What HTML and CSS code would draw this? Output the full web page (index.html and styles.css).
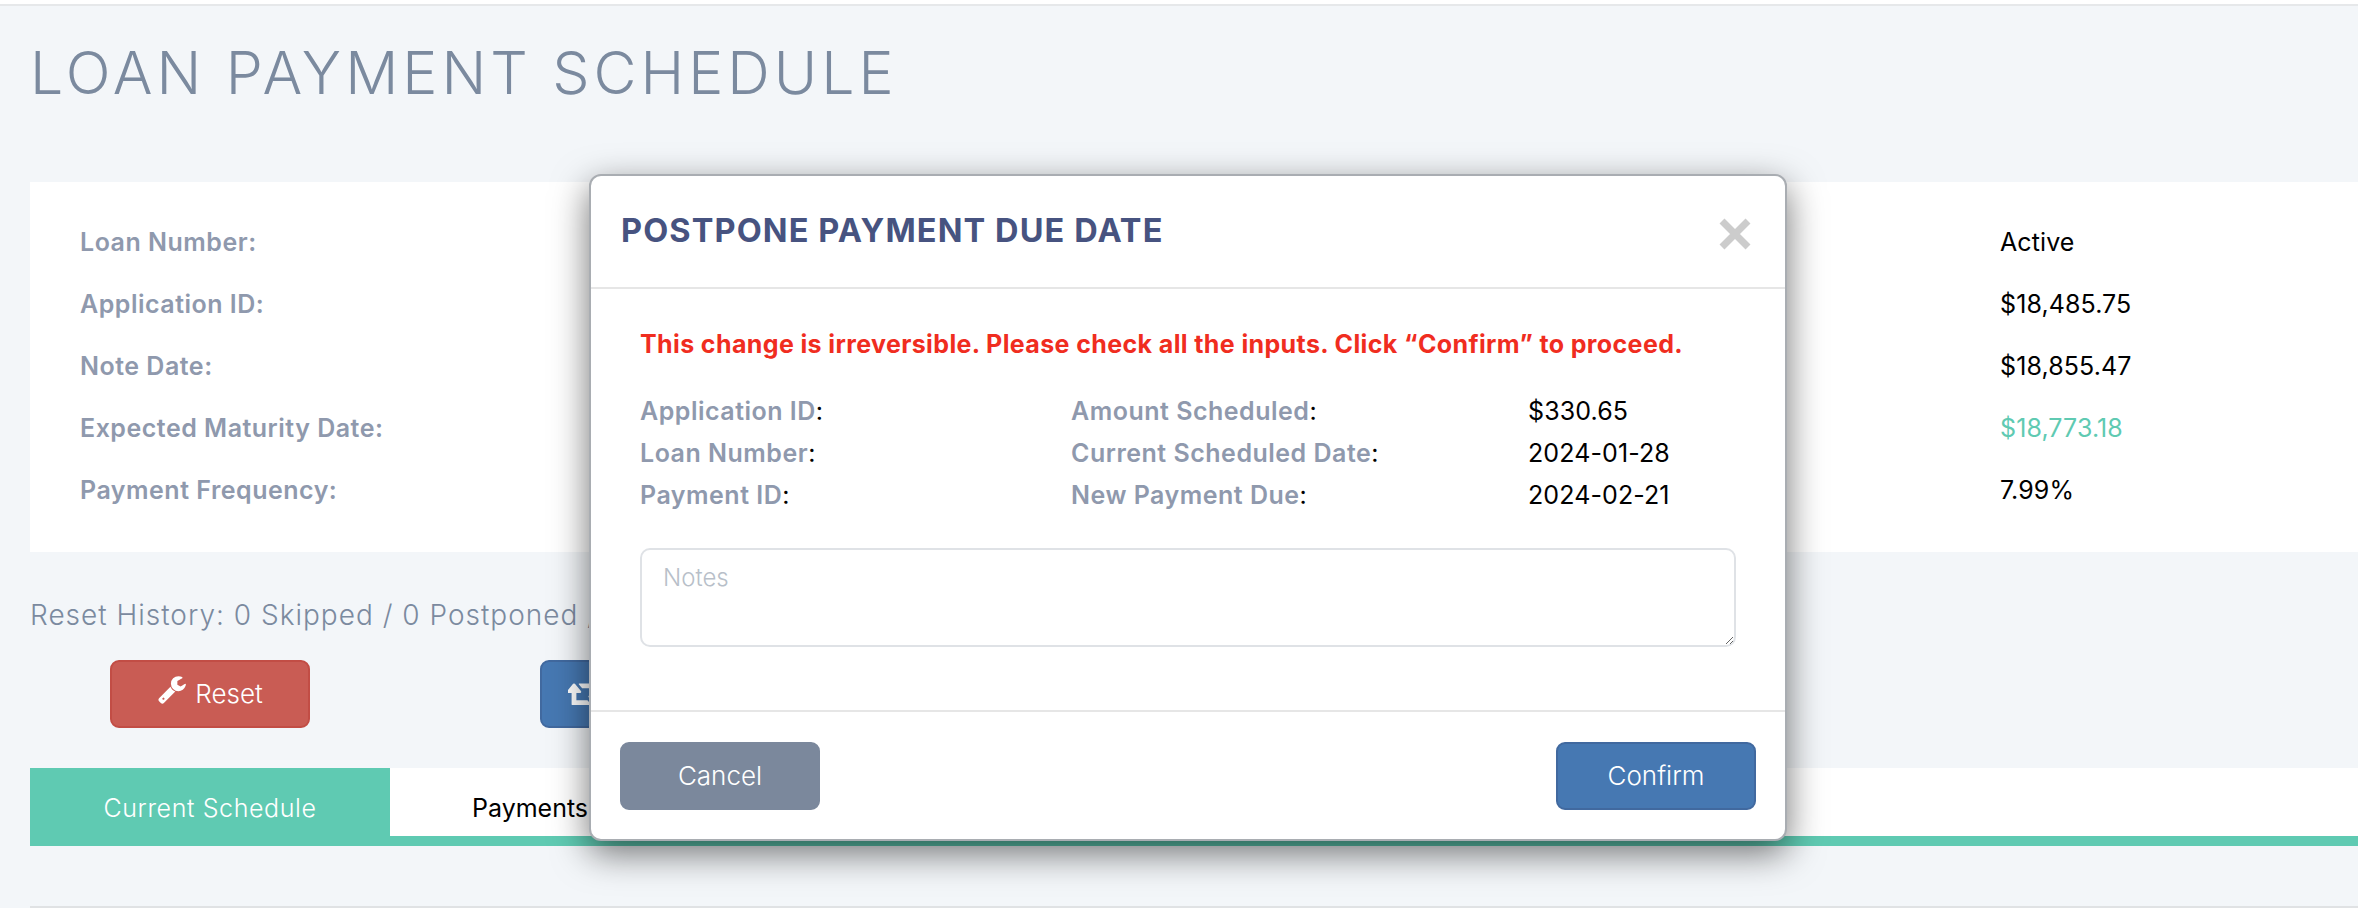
FILE: index.html
```html
<!DOCTYPE html>
<html lang="en">
<head>
<meta charset="utf-8">
<title>Loan Payment Schedule</title>
<link rel="stylesheet" href="styles.css">
</head>
<body>
<div class="topbar"></div>
<main class="page">
  <h1 class="page-title">LOAN PAYMENT SCHEDULE</h1>
  <section class="card">
    <div class="label">Loan Number:</div><div class="value">Active</div>
    <div class="label">Application ID:</div><div class="value">$18,485.75</div>
    <div class="label">Note Date:</div><div class="value">$18,855.47</div>
    <div class="label">Expected Maturity Date:</div><div class="value value-green">$18,773.18</div>
    <div class="label">Payment Frequency:</div><div class="value">7.99%</div>
  </section>
  <p class="history">Reset History: 0 Skipped / 0 Postponed / 0 Reset</p>
  <div class="actions">
    <button class="btn btn-red" type="button">
      <svg class="icon-wrench" viewBox="0 0 1792 1792" aria-hidden="true"><path fill="currentColor" d="M448 1472q0-26-19-45t-45-19-45 19-19 45 19 45 45 19 45-19 19-45zm644-420l-682 682q-37 37-90 37-52 0-91-37l-106-108q-38-36-38-90 0-53 38-91l681-681q39 98 114.5 173.5t173.5 114.5zm634-435q0 39-23 106-47 134-164.5 217.5t-258.5 83.5q-185 0-316.5-131.5t-131.5-316.5 131.5-316.5 316.5-131.5q58 0 121.5 16.5t107.5 46.5q16 11 16 28t-16 28l-293 169v224l193 107q5-3 79-48.5t135.5-81 70.5-35.5q15 0 23.5 10t8.5 25z"/></svg>
      Reset
    </button>
    <button class="btn btn-blue" type="button">
      <svg class="icon-retweet" viewBox="0 0 1920 1792" aria-hidden="true"><path fill="currentColor" d="M1216 1504q0 13-9.5 22.5t-22.5 9.5h-960q-8 0-13.5-2t-9-7-5.5-8-3-11.5-1-11.5v-600h-192q-26 0-45-19t-19-45q0-24 15-41l320-384q19-22 49-22t49 22l320 384q15 17 15 41 0 26-19 45t-45 19h-192v384h576q16 0 25 11l160 192q7 11 7 21zm640-416q0 24-15 41l-320 384q-20 23-49 23t-49-23l-320-384q-15-17-15-41 0-26 19-45t45-19h192v-384h-576q-16 0-25-12l-160-192q-7-9-7-20 0-13 9.5-22.5t22.5-9.5h960q8 0 13.5 2t9 7 5.5 8 3 11.5 1 11.5v600h192q26 0 45 19t19 45z"/></svg>
    </button>
  </div>
  <nav class="tabs">
    <a class="tab tab-active">Current Schedule</a>
    <a class="tab tab-plain">Payments</a>
  </nav>
  <hr class="rule">
</main>

<div class="modal" role="dialog">
  <header class="modal-header">
    <h2 class="modal-title">POSTPONE PAYMENT DUE DATE</h2>
    <svg class="close" viewBox="0 0 34 34" aria-label="Close"><path d="M4 4 L30 30 M30 4 L4 30" stroke="#cccccc" stroke-width="7" fill="none"/></svg>
  </header>
  <div class="modal-body">
    <p class="warning">This change is irreversible. Please check all the inputs. Click “Confirm” to proceed.</p>
    <div class="info">
      <div class="info-key"><b>Application ID</b>:</div>
      <div class="info-key"><b>Amount Scheduled</b>:</div>
      <div class="info-val">$330.65</div>
      <div class="info-key"><b>Loan Number</b>:</div>
      <div class="info-key"><b>Current Scheduled Date</b>:</div>
      <div class="info-val">2024-01-28</div>
      <div class="info-key"><b>Payment ID</b>:</div>
      <div class="info-key"><b>New Payment Due</b>:</div>
      <div class="info-val">2024-02-21</div>
    </div>
    <textarea class="notes" placeholder="Notes"></textarea>
  </div>
  <footer class="modal-footer">
    <button class="btn btn-grey" type="button">Cancel</button>
    <button class="btn btn-blue" type="button">Confirm</button>
  </footer>
</div>
</body>
</html>
```
FILE: styles.css
```css
* { box-sizing: border-box; }
html, body { margin: 0; padding: 0; height: 908px; overflow: hidden; }
body {
  background: #f3f6f9;
  font-family: "Inter", "Lato", sans-serif;
  font-size: 24px;
  color: #000;
}
.topbar { height: 6px; background: #fff; border-bottom: 2px solid #e6e8ea; }
.page { padding-left: 30px; }
.page-title {
  margin: 0;
  padding-top: 31px;
  height: 176px;
  font-size: 59px;
  line-height: 72px;
  font-weight: 300;
  letter-spacing: 4px;
  color: #7b8a9f;
}
.card {
  display: grid;
  grid-template-columns: 1920px 1fr;
  grid-auto-rows: 62px;
  align-items: center;
  background: #fff;
  height: 370px;
  padding: 29px 0 0 50px;
}
.label { font-weight: 600; color: #8f99ad; font-size: 25px; letter-spacing: .5px; }
.value { color: #000; font-size: 25px; letter-spacing: .1px; }
.value-green { color: #5fcab2; }
.history {
  margin: 0;
  height: 108px;
  padding-top: 44px;
  font-size: 28px;
  line-height: 38px;
  font-weight: 300;
  letter-spacing: 1px;
  color: #7b8a9f;
  white-space: nowrap;
}
.actions { display: flex; gap: 230px; padding-left: 80px; }
.btn {
  width: 200px;
  height: 68px;
  border-radius: 9px;
  border: 2px solid transparent;
  font-family: inherit;
  font-size: 26px;
  font-weight: 300;
  color: #fff;
  display: flex;
  align-items: center;
  justify-content: center;
  gap: 8px;
  padding: 0 0 2px;
}
.btn-red { background: #c95c54; border-color: #c24d45; }
.btn-blue { background: #4678b2; border-color: #41699f; }
.btn-grey { background: #7b889c; border-color: #7b889c; }
.icon-wrench { width: 30px; height: 30px; margin-top: -8px; }
.actions .btn-blue { justify-content: flex-start; padding-left: 26px; }
.icon-retweet { width: 36px; height: 34px; }
.tabs {
  display: flex;
  margin-top: 40px;
  height: 78px;
  background: #fff;
  border-bottom: 10px solid #5fcab2;
  font-size: 25px;
  font-weight: 300;
}
.tab { display: flex; align-items: center; height: 68px; padding-top: 12px; }
.tab-active { background: #5fcab2; color: #fff; width: 360px; justify-content: center; letter-spacing: .6px; }
.tab-plain { color: #000; font-weight: 400; padding-left: 82px; }
.rule { border: 0; height: 2px; background: #e0e2e4; margin: 60px 0 0; }

.modal {
  position: absolute;
  left: 589px;
  top: 174px;
  width: 1198px;
  height: 667px;
  background: #fff;
  border: 2px solid #a9adb2;
  border-radius: 12px;
  box-shadow: 0 12px 36px rgba(0, 0, 0, .55);
  display: flex;
  flex-direction: column;
}
.modal-header {
  height: 113px;
  flex: none;
  border-bottom: 2px solid #e6e6e6;
  display: flex;
  align-items: center;
  justify-content: space-between;
  padding: 0 33px 0 30px;
}
.modal-title { margin: -2px 0 0; font-size: 32.5px; font-weight: 700; color: #475380; letter-spacing: 1.1px; white-space: nowrap; }
.close { width: 34px; height: 34px; margin-top: 4px; }
.modal-body { flex: none; height: 423px; padding: 0 32px 0 49px; border-bottom: 2px solid #e6e6e6; }
.warning { margin: 0; padding-top: 39px; height: 101px; font-weight: 700; font-size: 25px; line-height: 32px; color: #f02d1f; letter-spacing: .38px; white-space: nowrap; }
.info {
  display: grid;
  grid-template-columns: 431px 457px 1fr;
  grid-auto-rows: 42px;
  align-items: center;
  font-size: 25px;
}
.info-key { color: #000; letter-spacing: .5px; }
.info-key b { color: #8f99ad; font-weight: 600; }
.info-val { letter-spacing: .1px; }
.notes {
  display: block;
  margin-top: 32px;
  width: 1096px;
  height: 99px;
  border: 2px solid #dfe2e6;
  border-radius: 10px;
  padding: 13px 21px;
  font-family: inherit;
  font-size: 24px;
  font-weight: 300;
  color: #000;
  background: #fff;
  outline: none;
}
.notes::placeholder { color: #b8bfc9; opacity: 1; }
.modal-footer { display: flex; justify-content: space-between; padding: 30px 29px 0 29px; }
```
